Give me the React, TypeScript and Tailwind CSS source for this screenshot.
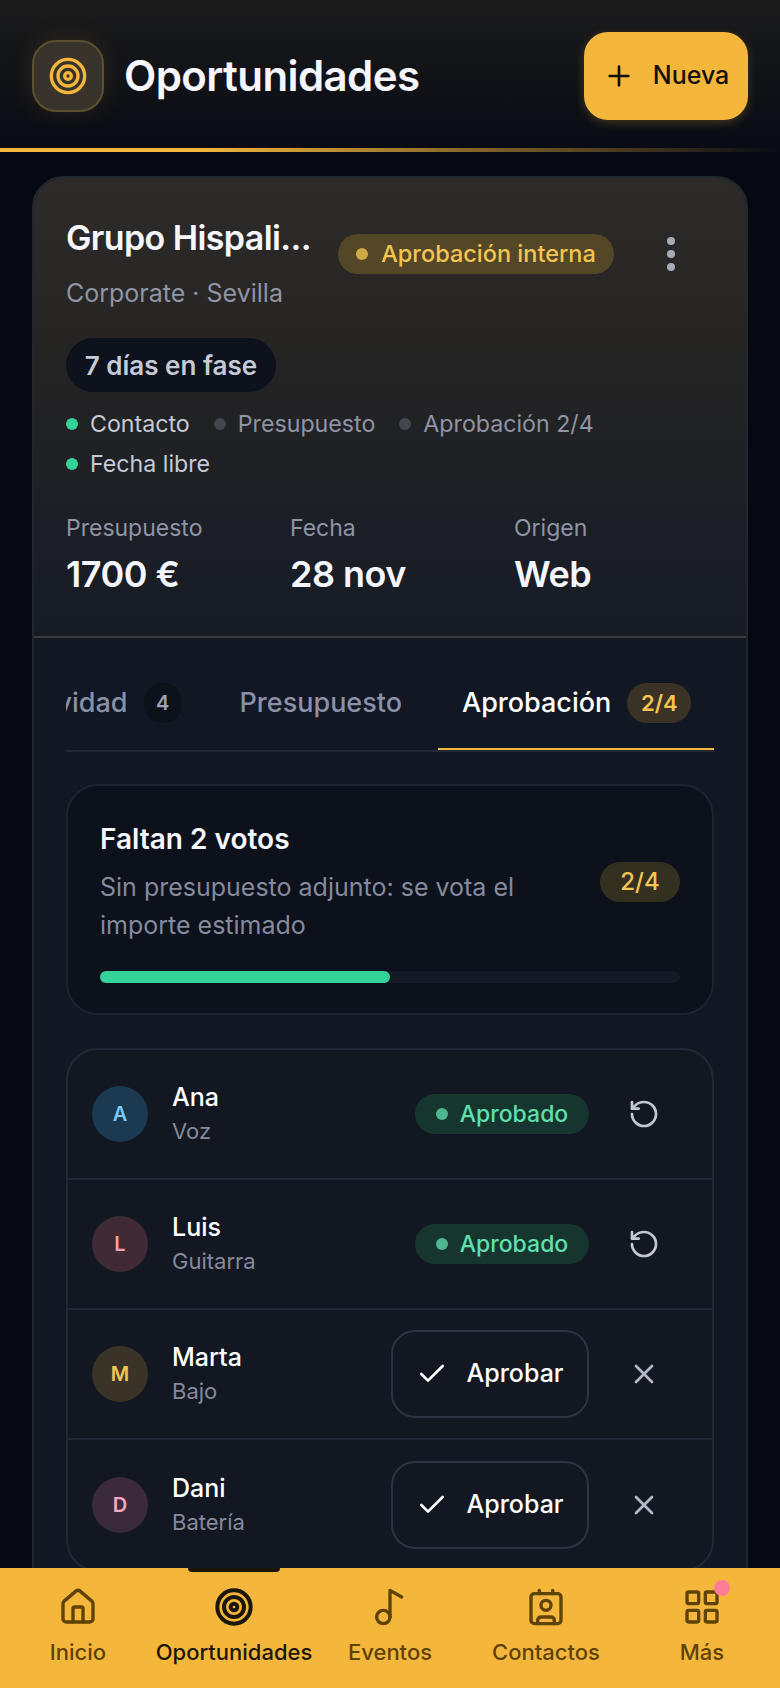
import React from 'react';
import { Check, Contact, House, LayoutGrid, Music2, Plus, RotateCcw, Target, X } from 'lucide-react';

const members = [
  { initial: 'A', name: 'Ana', role: 'Voz', avatar: 'bg-[#1b3a52] text-[#7cc8f8]', approved: true },
  { initial: 'L', name: 'Luis', role: 'Guitarra', avatar: 'bg-[#3f2a36] text-[#f9a0ac]', approved: true },
  { initial: 'M', name: 'Marta', role: 'Bajo', avatar: 'bg-[#3a3428] text-[#f5c451]', approved: false },
  { initial: 'D', name: 'Dani', role: 'Batería', avatar: 'bg-[#3a2a3a] text-[#f9a8c4]', approved: false },
];

const navItems = [
  { label: 'Inicio', icon: House },
  { label: 'Oportunidades', icon: Target, active: true },
  { label: 'Eventos', icon: Music2 },
  { label: 'Contactos', icon: Contact },
  { label: 'Más', icon: LayoutGrid, dot: true },
];

const Check_ = ({ label, on }: { label: string; on: boolean }) => (
  <div className="flex items-center gap-3">
    <span className={`w-3 h-3 rounded-full ${on ? 'bg-[#34d399]' : 'bg-[#44464d]'}`} />
    <span className={on ? 'text-[#c6cad6]' : 'text-[#8f94a6]'}>{label}</span>
  </div>
);

const Stat = ({ label, value }: { label: string; value: string }) => (
  <div className="w-[224px] shrink-0">
    <p className="text-[23px] leading-[32px] text-[#8f94a6]">{label}</p>
    <p className="mt-[8px] text-[36px] leading-[44px] font-semibold tracking-[-0.5px] text-[#f4f6fc]">{value}</p>
  </div>
);

const MemberRow = ({ initial, name, role, avatar, approved }: (typeof members)[number]) => (
  <div className="h-[130px] shrink-0 flex items-center pl-[24px] pr-[13px] border-b-2 border-[#232836] last:border-b-0">
    <div className={`w-14 h-14 rounded-full flex items-center justify-center text-[20px] font-semibold ${avatar}`}>{initial}</div>
    <div className="ml-6 flex-1 -mt-[2px]">
      <p className="text-[25px] leading-[34px] font-medium text-white">{name}</p>
      <p className="mt-[1px] text-[22px] leading-[32px] text-[#858a9c]">{role}</p>
    </div>
    {approved ? (
      <div className="h-10 w-[174px] rounded-full bg-[#17352f] flex items-center justify-center gap-3 text-[23px] font-medium text-[#5ee0ae]">
        <span className="w-3 h-3 rounded-full bg-[#4fb78f]" />
        Aprobado
      </div>
    ) : (
      <button className="h-[88px] w-[198px] rounded-[24px] border-2 border-[#2e3341] flex items-center justify-center gap-[18px] text-[25px] font-medium text-white">
        <Check className="w-8 h-8" strokeWidth={2} />
        Aprobar
      </button>
    )}
    <div className="w-[110px] flex justify-center">
      {approved ? (
        <RotateCcw className="w-8 h-8 text-[#c3c7d2]" strokeWidth={2} />
      ) : (
        <X className="w-8 h-8 text-[#b5bac8]" strokeWidth={2} />
      )}
    </div>
  </div>
);

export default function App() {
  return (
    <div className="relative h-[1688px] w-[780px] overflow-hidden bg-[#060911] font-['Inter',sans-serif]">
      <header className="h-[152px] px-8 flex items-center justify-between bg-[linear-gradient(180deg,#1b1b1b_0%,#080b14_100%)] relative">
        <div className="flex items-center gap-[20px]">
          <div className="w-[72px] h-[72px] rounded-[24px] border-2 border-[#5c5030] bg-[#38342c] shadow-[0_0_24px_rgba(245,185,64,0.12)] flex items-center justify-center">
            <Target className="w-10 h-10 text-[#f4b73c]" strokeWidth={2} />
          </div>
          <h1 className="text-[42px] leading-[52px] font-semibold tracking-[-0.6px] text-[#f6f7fc]">Oportunidades</h1>
        </div>
        <button className="w-[164px] h-[88px] rounded-[24px] bg-[#f4b73c] shadow-[0_3px_10px_rgba(245,185,64,0.22)] flex items-center justify-center gap-[18px] text-[25px] font-medium text-[#14110a]">
          <Plus className="w-8 h-8" strokeWidth={2} />
          Nueva
        </button>
        <div className="absolute left-0 right-0 bottom-0 h-[4px] bg-[linear-gradient(90deg,#f4b73c_0%,#f4b73c_25%,rgba(245,185,64,0)_100%)]" />
      </header>

      <main className="mx-8 mt-6 rounded-t-[32px] border-2 border-[#22262f] bg-[#111723]">
        <section className="h-[460px] px-[32px] pt-[24px] border-b-2 border-[#3a3b3d] rounded-t-[30px] bg-[linear-gradient(180deg,#2c2b29_0%,#262524_35%,#161b26_100%)]">
          <div className="flex items-center">
            <h2 className="w-[246px] text-[34px] leading-[58px] font-semibold tracking-[-0.6px] text-[#f6f7fc] whitespace-nowrap">Grupo Hispali...</h2>
            <div className="ml-[26px] mt-[32px] h-10 w-[276px] rounded-full bg-[#544727] flex items-center justify-center gap-[13px] text-[23.5px] font-medium text-[#f5c451]">
              <span className="w-3 h-3 rounded-full bg-[#cfa945]" />
              Aprobación interna
            </div>
            <div className="ml-[53px] mt-[32px] flex flex-col gap-[5px]">
              <span className="w-2 h-2 rounded-full bg-[#a6abbc]" />
              <span className="w-2 h-2 rounded-full bg-[#a6abbc]" />
              <span className="w-2 h-2 rounded-full bg-[#a6abbc]" />
            </div>
          </div>
          <p className="mt-[2px] text-[25px] leading-[34px] text-[#8f94a6]">Corporate · Sevilla</p>
          <div className="mt-[28px] h-[54px] w-[210px] rounded-full bg-[#0d121d] flex items-center justify-center text-[26px] font-semibold text-[#c6cad6]">7 días en fase</div>
          <div className="mt-[12px] flex flex-wrap gap-x-6 gap-y-0 text-[23.2px] leading-[40px]">
            <Check_ label="Contacto" on />
            <Check_ label="Presupuesto" on={false} />
            <Check_ label="Aprobación 2/4" on={false} />
            <Check_ label="Fecha libre" on />
          </div>
          <div className="mt-[28px] flex">
            <Stat label="Presupuesto" value="1700 €" />
            <Stat label="Fecha" value="28 nov" />
            <Stat label="Origen" value="Web" />
          </div>
        </section>

        <section className="px-[32px]">
          <div className="mt-[30px] h-[84px] border-b-2 border-[#232836] overflow-hidden relative">
            <div className="flex items-start mt-[15px] -ml-[60px] text-[27px] font-medium whitespace-nowrap">
              <div className="flex items-center h-10">
                <span className="text-[#8a90a6]">Actividad</span>
                <span className="ml-[16px] w-[38px] h-10 rounded-full bg-[#0c111a] flex items-center justify-center text-[20px] font-semibold text-[#9da2b4]">4</span>
              </div>
              <span className="ml-[58px] leading-10 text-[#8a90a6]">Presupuesto</span>
              <div className="ml-[60px] flex items-center h-10">
                <span className="text-white">Aprobación</span>
                <span className="ml-[16px] w-[64px] h-10 rounded-full bg-[#3a3225] flex items-center justify-center text-[22px] font-semibold text-[#f5c451]">2/4</span>
              </div>
            </div>
            <div className="absolute right-0 bottom-0 h-[2px] w-[276px] bg-[#f4b73c]" />
          </div>

          <div className="mt-[32px] h-[231px] rounded-[32px] border-2 border-[#1e2330] bg-[#0c111c] px-8 pt-[34px]">
            <div className="flex items-center justify-between">
              <div className="w-[440px]">
                <p className="text-[28px] leading-[38px] font-semibold text-[#f6f7fc]">Faltan 2 votos</p>
                <p className="mt-[10px] text-[25px] leading-[38px] text-[#858a9c]">Sin presupuesto adjunto: se vota el importe estimado</p>
              </div>
              <span className="w-20 h-10 rounded-full bg-[#33301f] flex items-center justify-center text-[24px] font-medium text-[#f5c451]">2/4</span>
            </div>
            <div className="mt-[27px] h-3 rounded-full bg-[#141925]">
              <div className="h-3 w-[290px] rounded-full bg-[#34d399]" />
            </div>
          </div>

          <div className="mt-[33px] rounded-[32px] border-2 border-[#232836] bg-[#121722] flex flex-col">
            {members.map(member => (
              <MemberRow key={member.name} {...member} />
            ))}
          </div>
        </section>
      </main>

      <nav className="absolute left-0 right-0 bottom-0 h-[120px] bg-[#f4b73c] grid grid-cols-5">
        {navItems.map(item => (
          <div key={item.label} className="relative flex flex-col items-center pt-[19px]">
            {item.active && <span className="absolute top-0 w-[92px] h-1 rounded-b-[4px] bg-[#1b1608]" />}
            <div className="relative">
              <item.icon className={`w-10 h-10 ${item.active ? 'text-[#1b1608]' : 'text-[#5e4206]'}`} strokeWidth={item.active ? 2.4 : 2} />
              {item.dot && <span className="absolute -top-[7px] -right-[8px] w-4 h-4 rounded-full bg-[#fb7d92]" />}
            </div>
            <span className={`mt-[11px] text-[22px] leading-[28px] font-medium whitespace-nowrap ${item.active ? 'text-[#1b1608]' : 'text-[#5e4206]'}`}>{item.label}</span>
          </div>
        ))}
      </nav>
    </div>
  );
}
